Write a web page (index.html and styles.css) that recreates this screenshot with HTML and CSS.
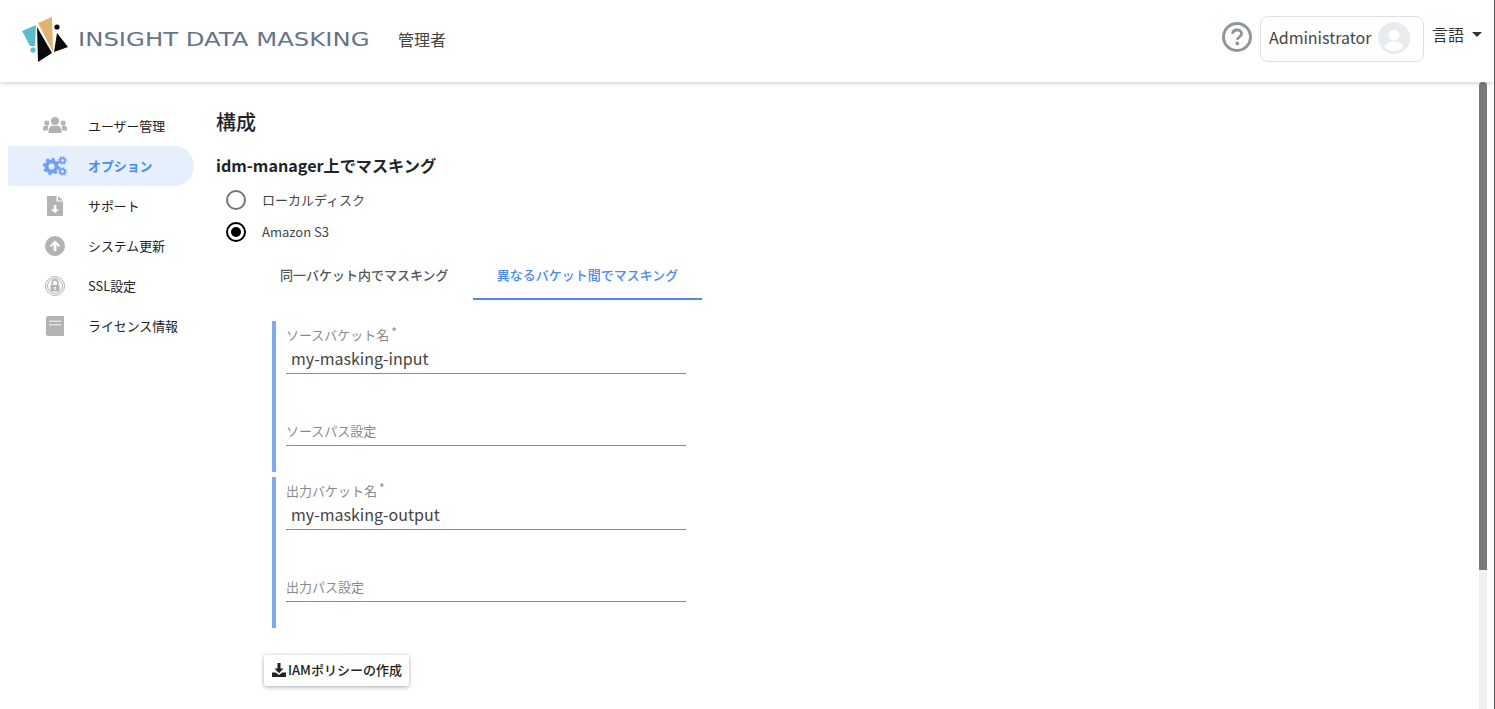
FILE: index.html
```html
<!DOCTYPE html>
<html lang="ja">
<head>
<meta charset="utf-8">
<title>Insight Data Masking</title>
<link rel="stylesheet" href="styles.css">
</head>
<body>
<div class="shell">
  <header class="topbar">
    <div class="brand">
      <svg class="logo-mark" width="48" height="48" viewBox="0 0 48 48">
        <polygon points="0,15 14,9 13,30 8,30" fill="#5bbccb"/>
        <circle cx="11" cy="34" r="2.600" fill="#5bbccb"/>
        <polygon points="16,7 30,1 31,36" fill="#e0b36e"/>
        <polygon points="15,11 30,37 16,46" fill="#0b0b0b"/>
        <polygon points="35,17 46,31 32,36" fill="#0b0b0b"/>
        <circle cx="35" cy="11" r="2.600" fill="#0b0b0b"/>
      </svg>
      <span class="logo-text">INSIGHT DATA MASKING</span>
    </div>
    <span class="role">管理者</span>
    <div class="top-right">
      <svg class="help" width="30" height="30" viewBox="0 0 30 30">
        <circle cx="15" cy="15" r="13.500" fill="none" stroke="#8f979d" stroke-width="3"/>
        <path d="M10.500 11.800c.3-2.500 2.200-3.800 4.600-3.800 2.600 0 4.500 1.500 4.500 3.700 0 3.200-4.200 3.200-4.200 6.100" fill="none" stroke="#8f979d" stroke-width="2.800"/>
        <circle cx="15.300" cy="21.500" r="1.900" fill="#8f979d"/>
      </svg>
      <div class="user-chip">
        <span class="user-name">Administrator</span>
        <svg class="avatar" width="32" height="32" viewBox="0 0 32 32">
          <circle cx="16" cy="16" r="16" fill="#e9ecef"/>
          <circle cx="16" cy="13" r="5.500" fill="#fff"/>
          <path d="M6.500 25c1.500-4 5-5.500 9.500-5.500s8 1.500 9.500 5.500c-2.500 2.500-5.800 4-9.500 4s-7-1.500-9.500-4z" fill="#fff"/>
        </svg>
      </div>
      <div class="lang">言語<span class="caret"></span></div>
    </div>
  </header>

  <div class="scroller">
    <div class="page">
      <nav class="sidebar">
        <a class="nav-item">
          <svg class="nav-icon" width="24" height="20" viewBox="0 0 24 20" fill="#b3b3b3">
            <circle cx="12" cy="5" r="4"/><circle cx="3.800" cy="7" r="2.500"/><circle cx="20.200" cy="7" r="2.500"/>
            <path d="M5.500 17v-2.500c0-3 2.500-4.800 4-4.800h5c1.500 0 4 1.800 4 4.800V17z"/>
            <path d="M4.800 14.500H0v-2.300c0-1.500 1-2.400 2.300-2.400h3c-.4 1.500-.5 3-.5 4.700zM19.200 14.500H24v-2.300c0-1.500-1-2.400-2.300-2.400h-3c.4 1.500.5 3 .5 4.700z"/>
          </svg>
          <span>ユーザー管理</span>
        </a>
        <a class="nav-item active">
          <svg class="nav-icon" width="24" height="20" viewBox="0 0 24 20" fill="none" stroke="#6f9ff5">
            <circle cx="8.500" cy="10.500" r="5" stroke-width="4"/>
            <circle cx="8.500" cy="10.500" r="7.500" stroke-width="2.400" stroke-dasharray="3 2.890"/>
            <circle cx="19.500" cy="4.500" r="2.300" stroke-width="1.800"/>
            <circle cx="19.500" cy="4.500" r="3.700" stroke-width="1.300" stroke-dasharray="1.500 1.400"/>
            <circle cx="19.500" cy="15.500" r="2.300" stroke-width="1.800"/>
            <circle cx="19.500" cy="15.500" r="3.700" stroke-width="1.300" stroke-dasharray="1.500 1.400"/>
          </svg>
          <span>オプション</span>
        </a>
        <a class="nav-item">
          <svg class="nav-icon" width="16" height="20" viewBox="0 0 16 20">
            <path d="M0 0h9.500v5.500H16V20H0zM11 0l5 4.500h-5z" fill="#b3b3b3"/>
            <path d="M6.700 9h2.600v4.200h2.700L8 17.300l-4-4.100h2.700z" fill="#fff"/>
          </svg>
          <span>サポート</span>
        </a>
        <a class="nav-item">
          <svg class="nav-icon" width="20" height="20" viewBox="0 0 20 20">
            <circle cx="10" cy="10" r="10" fill="#b3b3b3"/>
            <path d="M10 4.500l5.200 5.200-1.500 1.400-2.300-2.300V15H8.600V8.800l-2.300 2.300-1.500-1.400z" fill="#fff"/>
          </svg>
          <span>システム更新</span>
        </a>
        <a class="nav-item">
          <svg class="nav-icon" width="20" height="20" viewBox="0 0 20 20">
            <circle cx="10" cy="10" r="9.500" fill="none" stroke="#b3b3b3"/>
            <circle cx="10" cy="10" r="7.500" fill="none" stroke="#b3b3b3"/>
            <path d="M7 9V7a3 3 0 0 1 6 0v2" fill="none" stroke="#b3b3b3" stroke-width="1.500"/>
            <rect x="5.500" y="9" width="9" height="6.500" rx="1" fill="#b3b3b3"/>
            <path d="M10 10.500l1.500 1.800h-1v1.800h-1v-1.800h-1z" fill="#fff"/>
          </svg>
          <span>SSL設定</span>
        </a>
        <a class="nav-item">
          <svg class="nav-icon" width="18" height="20" viewBox="0 0 18 20">
            <path d="M2.500 0H18v15.500H4a1.500 1.500 0 0 0 0 3h14V20H2.500A2.500 2.500 0 0 1 0 17.500v-15A2.500 2.500 0 0 1 2.500 0z" fill="#b3b3b3"/>
            <rect x="3" y="4.500" width="12" height="1.500" fill="#e4e4e4"/>
            <rect x="3" y="8" width="12" height="1.500" fill="#e4e4e4"/>
            <rect x="1" y="14" width="17" height="6" rx="1" fill="#b3b3b3"/>
          </svg>
          <span>ライセンス情報</span>
        </a>
      </nav>

      <main class="content">
        <h1 class="title">構成</h1>
        <h2 class="subtitle">idm-manager上でマスキング</h2>
        <div class="radio-row"><span class="radio"></span><span>ローカルディスク</span></div>
        <div class="radio-row"><span class="radio checked"></span><span>Amazon S3</span></div>

        <div class="tabs">
          <div class="tab">同一バケット内でマスキング</div>
          <div class="tab active">異なるバケット間でマスキング</div>
        </div>

        <section class="group first">
          <div class="field filled">
            <label class="field-label">ソースバケット名<sup>*</sup></label>
            <div class="field-value">my-masking-input</div>
          </div>
          <div class="field empty"><label class="field-label">ソースパス設定</label></div>
        </section>
        <section class="group">
          <div class="field filled">
            <label class="field-label">出力バケット名<sup>*</sup></label>
            <div class="field-value">my-masking-output</div>
          </div>
          <div class="field empty"><label class="field-label">出力パス設定</label></div>
        </section>

        <button class="iam-btn" type="button">
          <svg width="14" height="14" viewBox="0 0 14 14" fill="#222">
            <path d="M5.500 0h3v5.500h3L7 10.200 2.500 5.500h3z"/>
            <path d="M0 9.500h3.800L7 12l3.200-2.500H14V14H0z"/>
          </svg>
          <span>IAMポリシーの作成</span>
        </button>
      </main>
    </div>
    <div class="scrollbar"><div class="scrollbar-thumb"></div></div>
  </div>
</div>
</body>
</html>
```

FILE: styles.css
```css
* { box-sizing: border-box; }
html, body { margin: 0; height: 100%; overflow: hidden; background: #fff; }
body {
  font-family: "Noto Sans CJK JP", "Noto Sans", sans-serif;
  color: #212529;
  font-size: 16px;
  border-right: 1px solid #555;
}
.shell { height: 100vh; display: flex; flex-direction: column; }

.topbar {
  flex: 0 0 82px;
  display: flex;
  align-items: flex-start;
  position: relative;
  z-index: 2;
  background: #fff;
  box-shadow: 0 1px 5px rgba(0, 0, 0, .22);
  padding-left: 22px;
}
.brand { display: flex; align-items: center; margin-top: 16px; width: 376px; }
.logo-mark { flex: none; overflow: visible; }
.logo-text {
  margin-left: 8px;
  margin-top: -3px;
  font-family: "DejaVu Sans", sans-serif;
  font-size: 20px;
  font-weight: 400;
  color: #64758a;
  white-space: nowrap;
  transform: scaleX(1.217);
  transform-origin: left center;
}
.role { margin-top: 27px; font-size: 16px; line-height: 24px; color: #444; }
.top-right { margin-left: auto; display: flex; align-items: flex-start; padding-right: 12px; }
.help { margin-top: 22px; margin-right: 8px; }
.user-chip {
  margin-top: 16px;
  width: 164px;
  height: 46px;
  border: 1px solid #dee2e6;
  border-radius: 8px;
  display: flex;
  align-items: center;
  padding: 0 13px 2px 8px;
  justify-content: space-between;
  color: #444;
}
.user-name { font-size: 16px; margin-top: -2px; }
.lang { margin-top: 22px; margin-left: 8px; font-size: 16px; line-height: 24px; color: #333; display: flex; align-items: center; }
.caret {
  margin-left: 8px;
  width: 0;
  height: 0;
  border-left: 5px solid transparent;
  border-right: 5px solid transparent;
  border-top: 5px solid #333;
}

.scroller { flex: 1; min-height: 0; overflow: hidden; position: relative; }
.scrollbar { position: absolute; top: 0; bottom: 0; right: 7px; width: 8px; background: #f1f1f1; }
.scrollbar-thumb { height: 488px; background: #7a7a7a; border-radius: 4px 4px 0 0; }

.page { display: flex; align-items: flex-start; padding: 24px 0 0 8px; height: 806px; }

.sidebar { flex: 0 0 186px; display: flex; flex-direction: column; }
.nav-item {
  height: 40px;
  display: flex;
  align-items: center;
  position: relative;
  padding: 0 0 2px 80px;
  font-size: 12.900px;
  color: #222;
  border-radius: 0 20px 20px 0;
}
.nav-icon { position: absolute; left: 47px; top: 50%; transform: translate(-50%, -50%); }
.nav-item.active { background: #e6effc; color: #4a8af4; font-weight: 700; }

.content { flex: 1; padding-left: 22px; }
.title { margin: -1px 0 0; font-size: 20px; line-height: 34px; font-weight: 500; color: #212529; }
.subtitle { margin: 14px 0 0; font-size: 16.150px; line-height: 24px; font-weight: 700; color: #212529; }
.radio-row { height: 32px; display: flex; align-items: center; padding-left: 10px; font-size: 13px; color: #444; }
.subtitle + .radio-row { margin-top: 6px; }
.radio { width: 20px; height: 20px; border: 2px solid #757575; border-radius: 50%; margin-right: 16px; margin-top: 1px; display: grid; place-items: center; }
.radio.checked { border-color: #000; border-width: 2.500px; }
.radio.checked::after { content: ""; width: 10px; height: 10px; border-radius: 50%; background: #000; }

.tabs { display: flex; margin: 7px 0 21px 40px; }
.tab { height: 46px; padding: 0 24px 4px; display: flex; align-items: center; font-size: 13px; font-weight: 500; color: #555; border-bottom: 2px solid transparent; }
.tab.active { color: #4a8af4; border-bottom-color: #4a8af4; }

.group { margin-left: 56px; width: 414px; height: 151px; border-left: 4px solid #7baaf7; padding-left: 10px; }
.group + .group { margin-top: 5px; }
.field { width: 400px; border-bottom: 1px solid #8a8a8a; }
.field.filled { height: 53px; padding-top: 4px; }
.field.empty { height: 39px; margin-top: 33px; padding-top: 14px; }
.field-label { display: block; font-size: 13px; line-height: 20px; color: #8a8a8a; }
.field-label sup { font-size: 12px; line-height: 0; vertical-align: 3px; margin-left: 2px; }
.field-value { font-size: 16px; line-height: 24px; margin-top: 1px; padding-left: 5px; color: #444; }

.iam-btn {
  margin: 27px 0 0 48px;
  width: 145px;
  height: 31px;
  border: 0;
  border-radius: 2px;
  background: #fff;
  box-shadow: 0 1px 4px rgba(0, 0, 0, .35);
  display: flex;
  align-items: center;
  padding: 0 0 2px 8px;
  gap: 2px;
  font-family: inherit;
  font-size: 13px;
  font-weight: 500;
  color: #222;
}
```
